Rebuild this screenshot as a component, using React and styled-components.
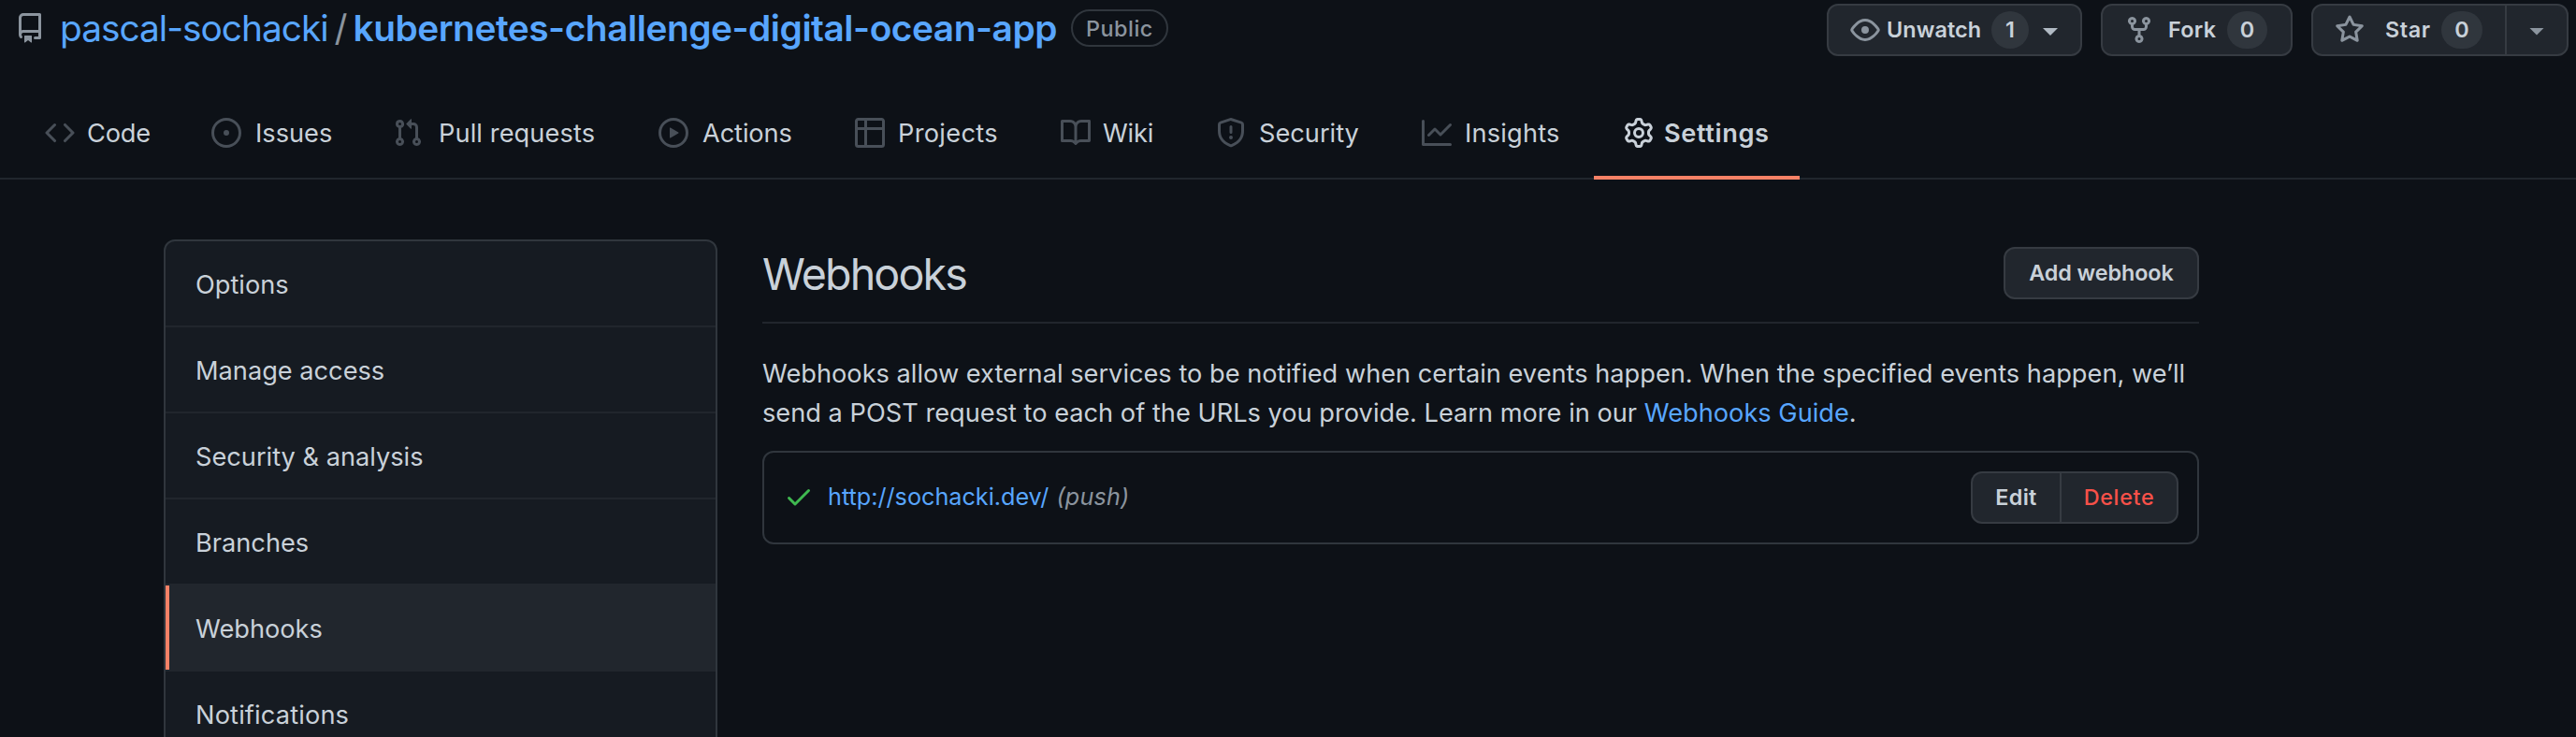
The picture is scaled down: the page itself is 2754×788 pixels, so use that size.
import React from "react";
import styled, { createGlobalStyle, css } from "styled-components";

const c = {
  bg: "#0d1117",
  panel: "#161b22",
  raised: "#21262d",
  line: "#21262d",
  border: "#30363d",
  buttonBorder: "#363b42",
  text: "#c9d1d9",
  muted: "#8b949e",
  faint: "#484f58",
  link: "#58a6ff",
  accent: "#f78166",
  danger: "#f85149",
  ok: "#3fb950",
};

const GlobalStyle = createGlobalStyle`
  *, *::before { box-sizing: border-box; }
  body {
    margin: 0;
    height: 788px;
    overflow: hidden;
    background: ${c.bg};
    color: ${c.text};
    font-family: Inter, "Liberation Sans", sans-serif;
    font-size: 27.2px;
  }
`;

const paths = {
  repo: "M2 2.5A2.5 2.5 0 014.5 0h8.75a.75.75 0 01.75.75v12.5a.75.75 0 01-.75.75h-2.5a.75.75 0 110-1.5h1.75v-2h-8a1 1 0 00-.714 1.7.75.75 0 01-1.072 1.05A2.495 2.495 0 012 11.5v-9zm10.5-1V9h-8c-.356 0-.694.074-1 .208V2.5a1 1 0 011-1h8zM5 12.25v3.25a.25.25 0 00.4.2l1.45-1.087a.25.25 0 01.3 0L8.6 15.7a.25.25 0 00.4-.2v-3.25a.25.25 0 00-.25-.25h-3.5a.25.25 0 00-.25.25z",
  code: "M4.72 3.22a.75.75 0 011.06 1.06L2.06 8l3.72 3.72a.75.75 0 11-1.06 1.06L.47 8.53a.75.75 0 010-1.06l4.25-4.25zm6.56 0a.75.75 0 10-1.06 1.06L13.94 8l-3.72 3.72a.75.75 0 101.06 1.06l4.25-4.25a.75.75 0 000-1.06l-4.25-4.25z",
  issue: "M8 9.5a1.5 1.5 0 100-3 1.5 1.5 0 000 3zM8 0a8 8 0 100 16A8 8 0 008 0zM1.5 8a6.5 6.5 0 1113 0 6.5 6.5 0 01-13 0z",
  pull: "M7.177 3.073L9.573.677A.25.25 0 0110 .854v4.792a.25.25 0 01-.427.177L7.177 3.427a.25.25 0 010-.354zM3.75 2.5a.75.75 0 100 1.5.75.75 0 000-1.5zm-2.25.75a2.25 2.25 0 113 2.122v5.256a2.251 2.251 0 11-1.5 0V5.372A2.25 2.25 0 011.5 3.25zM11 2.5h-1V4h1a1 1 0 011 1v5.628a2.251 2.251 0 101.5 0V5A2.5 2.5 0 0011 2.5zm1 10.25a.75.75 0 111.5 0 .75.75 0 01-1.5 0zM3.75 12a.75.75 0 100 1.5.75.75 0 000-1.5z",
  play: "M1.5 8a6.5 6.5 0 1113 0 6.5 6.5 0 01-13 0zM8 0a8 8 0 100 16A8 8 0 008 0zM6.379 5.227A.25.25 0 006 5.442v5.117a.25.25 0 00.379.214l4.264-2.559a.25.25 0 000-.428L6.379 5.227z",
  table: "M0 1.75C0 .784.784 0 1.75 0h12.5C15.216 0 16 .784 16 1.75v3.585a.746.746 0 010 .83v8.085A1.75 1.75 0 0114.25 16H6.309a.748.748 0 01-1.118 0H1.75A1.75 1.75 0 010 14.25V6.165a.746.746 0 010-.83V1.75zM1.5 6.5v7.75c0 .138.112.25.25.25H5v-8H1.5zM5 5H1.5V1.75a.25.25 0 01.25-.25H5V5zm1.5 1.5v8h7.75a.25.25 0 00.25-.25V6.5h-8zm8-1.5h-8V1.5h7.75a.25.25 0 01.25.25V5z",
  book: "M0 1.75A.75.75 0 01.75 1h4.253c1.227 0 2.317.59 3 1.501A3.744 3.744 0 0111.006 1h4.245a.75.75 0 01.75.75v10.5a.75.75 0 01-.75.75h-4.507a2.25 2.25 0 00-1.591.659l-.622.621a.75.75 0 01-1.06 0l-.622-.621A2.25 2.25 0 005.258 13H.75a.75.75 0 01-.75-.75V1.75zm8.755 3a2.25 2.25 0 012.25-2.25H14.5v9h-3.757c-.71 0-1.4.201-1.992.572l.004-7.322zm-1.504 7.324l.004-5.073-.002-2.253A2.25 2.25 0 005.003 2.5H1.5v9h3.757a3.75 3.75 0 011.994.574z",
  shield: "M7.467.133a1.75 1.75 0 011.066 0l5.25 1.68A1.75 1.75 0 0115 3.48V7c0 1.566-.32 3.182-1.303 4.682-.983 1.498-2.585 2.813-5.032 3.855a1.7 1.7 0 01-1.33 0c-2.447-1.042-4.049-2.357-5.032-3.855C1.32 10.182 1 8.566 1 7V3.48a1.75 1.75 0 011.217-1.667l5.25-1.68zm.61 1.429a.25.25 0 00-.153 0l-5.25 1.68a.25.25 0 00-.174.238V7c0 1.358.275 2.666 1.057 3.86.784 1.194 2.121 2.34 4.366 3.297a.2.2 0 00.154 0c2.245-.956 3.582-2.104 4.366-3.298C13.225 9.666 13.5 8.36 13.5 7V3.48a.25.25 0 00-.174-.237l-5.25-1.68zM9 10.5a1 1 0 11-2 0 1 1 0 012 0zm-.25-5.75a.75.75 0 10-1.5 0v3a.75.75 0 001.5 0v-3z",
  graph: "M1.5 1.75a.75.75 0 00-1.5 0v12.5c0 .414.336.75.75.75h14.5a.75.75 0 000-1.5H1.5V1.75zm14.28 2.53a.75.75 0 00-1.06-1.06L10 7.94 7.53 5.47a.75.75 0 00-1.06 0L3.22 8.72a.75.75 0 001.06 1.06L7 7.06l2.47 2.47a.75.75 0 001.06 0l5.25-5.25z",
  gear: "M7.429 1.525a6.593 6.593 0 011.142 0c.036.003.108.036.137.146l.289 1.105c.147.56.55.967.997 1.189.174.086.341.183.501.29.417.278.97.423 1.53.27l1.102-.303c.11-.03.175.016.195.046.219.31.41.641.573.989.014.031.022.11-.059.19l-.815.806c-.411.406-.562.957-.53 1.456a4.588 4.588 0 010 .582c-.032.499.119 1.05.53 1.456l.815.806c.08.08.073.159.059.19a6.494 6.494 0 01-.573.99c-.02.029-.086.074-.195.045l-1.103-.303c-.559-.153-1.112-.008-1.529.27-.16.107-.327.204-.5.29-.449.222-.851.628-.998 1.189l-.289 1.105c-.029.11-.101.143-.137.146a6.613 6.613 0 01-1.142 0c-.036-.003-.108-.037-.137-.146l-.289-1.105c-.147-.56-.55-.967-.997-1.189a4.502 4.502 0 01-.501-.29c-.417-.278-.97-.423-1.53-.27l-1.102.303c-.11.03-.175-.016-.195-.046a6.492 6.492 0 01-.573-.989c-.014-.031-.022-.11.059-.19l.815-.806c.411-.406.562-.957.53-1.456a4.587 4.587 0 010-.582c.032-.499-.119-1.05-.53-1.456l-.815-.806c-.08-.08-.073-.159-.059-.19a6.44 6.44 0 01.573-.99c.02-.029.086-.075.195-.045l1.103.303c.559.153 1.112.008 1.529-.27.16-.107.327-.204.5-.29.449-.222.851-.628.998-1.189l.289-1.105c.029-.11.101-.143.137-.146zM8 0c-.236 0-.47.01-.701.03-.743.065-1.29.615-1.458 1.261l-.29 1.106c-.017.066-.078.158-.211.224a5.994 5.994 0 00-.668.386c-.123.082-.233.09-.3.071L3.27 2.776c-.644-.177-1.392.02-1.82.63a7.977 7.977 0 00-.704 1.217c-.315.675-.111 1.422.363 1.891l.815.806c.05.048.098.147.088.294a6.084 6.084 0 000 .772c.01.147-.038.246-.088.294l-.815.806c-.474.469-.678 1.216-.363 1.891.2.428.436.835.704 1.218.428.609 1.176.806 1.82.63l1.103-.303c.066-.019.176-.011.299.071.213.143.436.272.668.386.133.066.194.158.212.224l.289 1.106c.169.646.715 1.196 1.458 1.26a8.094 8.094 0 001.402 0c.743-.064 1.29-.614 1.458-1.26l.29-1.106c.017-.066.078-.158.211-.224a5.98 5.98 0 00.668-.386c.123-.082.233-.09.3-.071l1.102.302c.644.177 1.392-.02 1.82-.63.268-.382.505-.789.704-1.217.315-.675.111-1.422-.364-1.891l-.814-.806c-.05-.048-.098-.147-.088-.294a6.1 6.1 0 000-.772c-.01-.147.039-.246.088-.294l.814-.806c.475-.469.679-1.216.364-1.891a7.992 7.992 0 00-.704-1.218c-.428-.609-1.176-.806-1.82-.63l-1.103.303c-.066.019-.176.011-.299-.071a5.991 5.991 0 00-.668-.386c-.133-.066-.194-.158-.212-.224L10.16 1.29C9.99.645 9.444.095 8.701.031A8.094 8.094 0 008 0zm1.5 8a1.5 1.5 0 11-3 0 1.5 1.5 0 013 0zM11 8a3 3 0 11-6 0 3 3 0 016 0z",
  eye: "M1.679 7.932c.412-.621 1.242-1.75 2.366-2.717C5.175 4.242 6.527 3.5 8 3.5c1.473 0 2.824.742 3.955 1.715 1.124.967 1.954 2.096 2.366 2.717a.119.119 0 010 .136c-.412.621-1.242 1.75-2.366 2.717C10.825 11.758 9.473 12.5 8 12.5c-1.473 0-2.824-.742-3.955-1.715C2.92 9.818 2.09 8.69 1.679 8.068a.119.119 0 010-.136zM8 2c-1.981 0-3.67.992-4.933 2.078C1.797 5.169.88 6.423.43 7.1a1.619 1.619 0 000 1.798c.45.678 1.367 1.932 2.637 3.024C4.329 13.008 6.019 14 8 14c1.981 0 3.67-.992 4.933-2.078 1.27-1.091 2.187-2.345 2.637-3.023a1.619 1.619 0 000-1.798c-.45-.678-1.367-1.932-2.637-3.023C11.671 2.992 9.981 2 8 2zm0 8a2 2 0 100-4 2 2 0 000 4z",
  fork: "M5 3.25a.75.75 0 11-1.5 0 .75.75 0 011.5 0zm0 2.122a2.25 2.25 0 10-1.5 0v.878A2.25 2.25 0 005.75 8.5h1.5v2.128a2.251 2.251 0 101.5 0V8.5h1.5a2.25 2.25 0 002.25-2.25v-.878a2.25 2.25 0 10-1.5 0v.878a.75.75 0 01-.75.75h-4.5A.75.75 0 015 6.25v-.878zm3.75 7.378a.75.75 0 11-1.5 0 .75.75 0 011.5 0zm3-8.75a.75.75 0 100-1.5.75.75 0 000 1.5z",
  star: "M8 .25a.75.75 0 01.673.418l1.882 3.815 4.21.612a.75.75 0 01.416 1.279l-3.046 2.97.719 4.192a.75.75 0 01-1.088.791L8 12.347l-3.766 1.98a.75.75 0 01-1.088-.79l.72-4.194L.818 6.374a.75.75 0 01.416-1.28l4.21-.611L7.327.668A.75.75 0 018 .25zm0 2.445L6.615 5.5a.75.75 0 01-.564.41l-3.097.45 2.24 2.184a.75.75 0 01.216.664l-.528 3.084 2.769-1.456a.75.75 0 01.698 0l2.77 1.456-.53-3.084a.75.75 0 01.216-.664l2.24-2.183-3.096-.45a.75.75 0 01-.564-.41L8 2.694v.001z",
  check: "M13.78 4.22a.75.75 0 010 1.06l-7.25 7.25a.75.75 0 01-1.06 0L2.22 9.28a.75.75 0 011.06-1.06L6 10.94l6.72-6.72a.75.75 0 011.06 0z",
};

const Svg = styled.svg`
  flex: none;
  display: block;
  width: 32px;
  height: 32px;
  color: ${(p) => p.$color || c.muted};
`;

const Icon = ({ name, color }) => (
  <Svg $color={color} viewBox="0 0 16 16" fill="currentColor" fillRule="evenodd" aria-hidden="true">
    <path fillRule="evenodd" d={paths[name]} />
  </Svg>
);

const TopBar = styled.header`
  display: flex;
  justify-content: space-between;
  align-items: flex-start;
  height: 94px;
  padding: 4px 8px 0 16px;
`;

const RepoTitle = styled.h1`
  display: flex;
  align-items: center;
  height: 52px;
  margin: 0;
  font-size: 38.8px;
  font-weight: 400;
  white-space: nowrap;
`;

const Owner = styled.a`
  margin-left: 16px;
  padding-bottom: 2px;
  color: ${c.link};
  letter-spacing: -0.99px;
`;

const Slash = styled.span`
  margin: 0 6px 0 7px;
  padding-bottom: 2px;
  color: ${c.muted};
`;

const RepoName = styled.a`
  padding-bottom: 2px;
  color: ${c.link};
  font-weight: 600;
  letter-spacing: -0.45px;
`;

const Visibility = styled.span`
  display: flex;
  align-items: center;
  justify-content: center;
  width: 104px;
  height: 40px;
  margin-left: 15px;
  border: 2px solid ${c.border};
  border-radius: 20px;
  color: ${c.muted};
  font-size: 23.4px;
  font-weight: 500;
  letter-spacing: 0.5px;
`;

const Actions = styled.div`
  display: flex;
  gap: 20px;
`;

const buttonSurface = css`
  display: flex;
  align-items: center;
  height: 56px;
  border: 2px solid ${c.buttonBorder};
  background: ${c.raised};
  color: ${c.text};
  font-family: inherit;
  font-size: 23.4px;
  font-weight: ${(p) => (p.$danger ? 500 : 600)};
  letter-spacing: ${(p) => p.$track ?? 0.3}px;
`;

const Button = styled.button`
  ${buttonSurface}
  justify-content: ${(p) => (p.$start ? "flex-start" : "center")};
  width: ${(p) => p.$width}px;
  padding: 0 0 ${(p) => (p.$start ? "0" : "1px")} ${(p) => (p.$start ? "23px" : "0")};
  border-radius: 12px;
  ${(p) => p.$danger && `color: ${c.danger};`}
`;

const ButtonGroup = styled.div`
  display: flex;
  ${Button}:first-child {
    border-radius: 12px 0 0 12px;
  }
  ${Button}:last-child {
    margin-left: -2px;
    border-radius: 0 12px 12px 0;
  }
`;

const ButtonLabel = styled.span`
  width: ${(p) => p.$width}px;
  margin-left: ${(p) => p.$gap}px;
  padding-bottom: 1px;
  text-align: left;
`;

const Counter = styled.span`
  display: flex;
  align-items: center;
  justify-content: center;
  width: ${(p) => p.$width}px;
  height: 40px;
  padding-bottom: 1px;
  border-radius: 20px;
  background: ${c.border};
  letter-spacing: 0;
`;

const Caret = styled.span`
  width: 16px;
  height: 8px;
  margin: 4px 0 0 ${(p) => p.$gap || 0}px;
  background: ${(p) => p.$color};
  clip-path: polygon(0 0, 100% 0, 50% 100%);
`;

const Nav = styled.nav`
  display: flex;
  height: 98px;
  padding-left: 16px;
  border-bottom: 2px solid ${c.line};
`;

const Tab = styled.a`
  display: flex;
  align-items: center;
  gap: ${(p) => p.$gap ?? 16}px;
  width: ${(p) => p.$width}px;
  height: 98px;
  padding: 2px 0 0 32px;
  border-bottom: 4px solid ${(p) => (p.$active ? c.accent : "transparent")};
  font-weight: ${(p) => (p.$active ? 600 : 400)};
  letter-spacing: ${(p) => p.$track || 0}px;
  white-space: nowrap;
`;

const Main = styled.main`
  display: flex;
  align-items: flex-start;
  gap: 48px;
  padding: 64px 0 0 175px;
`;

const Menu = styled.nav`
  width: 592px;
  border: 2px solid ${c.border};
  border-radius: 12px;
  background: ${c.panel};
  overflow: hidden;
`;

const MenuItem = styled.a`
  display: flex;
  align-items: center;
  position: relative;
  height: 92px;
  padding: 2px 0 0 32px;
  border-bottom: 2px solid ${c.line};
  letter-spacing: ${(p) => p.$track || 0}px;
  ${(p) =>
    p.$selected &&
    css`
      background: ${c.raised};
      &::before {
        content: "";
        position: absolute;
        inset: 0 auto 0 0;
        width: 4px;
        background: ${c.accent};
      }
    `}
`;

const Content = styled.section`
  width: 1536px;
`;

const Subhead = styled.div`
  display: flex;
  align-items: center;
  justify-content: space-between;
  height: 90px;
  padding: 8px 0 24px;
  border-bottom: 2px solid ${c.line};
`;

const Heading = styled.h2`
  margin: 2px 0 0;
  font-size: 46.6px;
  font-weight: 400;
  letter-spacing: -1.87px;
`;

const Intro = styled.p`
  margin: 33px 0 19px;
  line-height: 42px;
  letter-spacing: 0.01px;
  white-space: nowrap;
`;

const Link = styled.a`
  color: ${c.link};
`;

const HookRow = styled.div`
  display: flex;
  align-items: center;
  justify-content: space-between;
  height: 100px;
  padding: 0 20px 0 21px;
  border: 2px solid ${c.border};
  border-radius: 12px;
`;

const Hook = styled.div`
  display: flex;
  align-items: center;
  padding-bottom: 3px;
  font-size: 25.2px;
`;

const HookUrl = styled(Link)`
  margin-left: 15px;
`;

const HookEvents = styled.em`
  margin-left: 8px;
  color: ${c.muted};
  letter-spacing: 0.2px;
`;

const tabs = [
  { icon: "code", label: "Code", width: 178, gap: 13, track: -0.15 },
  { icon: "issue", label: "Issues", width: 194, gap: 15 },
  { icon: "pull", label: "Pull requests", width: 284, gap: 17, track: 0.1 },
  { icon: "play", label: "Actions", width: 210, gap: 15, track: -0.1 },
  { icon: "table", label: "Projects", width: 220, gap: 14, track: 0.3 },
  { icon: "book", label: "Wiki", width: 166, gap: 13, track: -0.2 },
  { icon: "shield", label: "Security", width: 220, gap: 14 },
  { icon: "graph", label: "Insights", width: 216, gap: 14, track: 0.2 },
  { icon: "gear", label: "Settings", width: 220, gap: 11, track: 0.6, active: true },
];

const menu = [
  { label: "Options" },
  { label: "Manage access" },
  { label: "Security & analysis" },
  { label: "Branches" },
  { label: "Webhooks", selected: true },
  { label: "Notifications", track: 0.15 },
];

export default function App() {
  return (
    <>
      <GlobalStyle />
      <TopBar>
        <RepoTitle>
          <Icon name="repo" />
          <Owner>pascal-sochacki</Owner>
          <Slash>/</Slash>
          <RepoName>kubernetes-challenge-digital-ocean-app</RepoName>
          <Visibility>Public</Visibility>
        </RepoTitle>
        <Actions>
          <Button $start $width={273} $track={0.1}>
            <Icon name="eye" />
            <ButtonLabel $gap={7} $width={112}>Unwatch</ButtonLabel>
            <Counter $width={40}>1</Counter>
            <Caret $gap={15} $color="#b1bac4" />
          </Button>
          <Button $start $width={205}>
            <Icon name="fork" />
            <ButtonLabel $gap={15} $width={63}>Fork</ButtonLabel>
            <Counter $width={43}>0</Counter>
          </Button>
          <ButtonGroup>
            <Button $start $width={209} $track={0.6}>
              <Icon name="star" />
              <ButtonLabel $gap={22} $width={60}>Star</ButtonLabel>
              <Counter $width={44}>0</Counter>
            </Button>
            <Button $width={68} aria-label="More star options">
              <Caret $color={c.muted} />
            </Button>
          </ButtonGroup>
        </Actions>
      </TopBar>
      <Nav>
        {tabs.map((t) => (
          <Tab key={t.label} $width={t.width} $gap={t.gap} $track={t.track} $active={t.active}>
            <Icon name={t.icon} color={t.active ? c.text : c.faint} />
            {t.label}
          </Tab>
        ))}
      </Nav>
      <Main>
        <Menu>
          {menu.map((m) => (
            <MenuItem key={m.label} $selected={m.selected} $track={m.track}>
              {m.label}
            </MenuItem>
          ))}
        </Menu>
        <Content>
          <Subhead>
            <Heading>Webhooks</Heading>
            <Button $width={209} $track={-0.1}>Add webhook</Button>
          </Subhead>
          <Intro>
            Webhooks allow external services to be notified when certain events happen. When the specified events happen, we’ll
            <br />
            send a POST request to each of the URLs you provide. Learn more in our <Link>Webhooks Guide</Link>.
          </Intro>
          <HookRow>
            <Hook>
              <Icon name="check" color={c.ok} />
              <HookUrl>http://sochacki.dev/</HookUrl>
              <HookEvents>(push)</HookEvents>
            </Hook>
            <ButtonGroup>
              <Button $width={97} $track={0.3}>Edit</Button>
              <Button $width={127} $track={0.66} $danger>Delete</Button>
            </ButtonGroup>
          </HookRow>
        </Content>
      </Main>
    </>
  );
}
